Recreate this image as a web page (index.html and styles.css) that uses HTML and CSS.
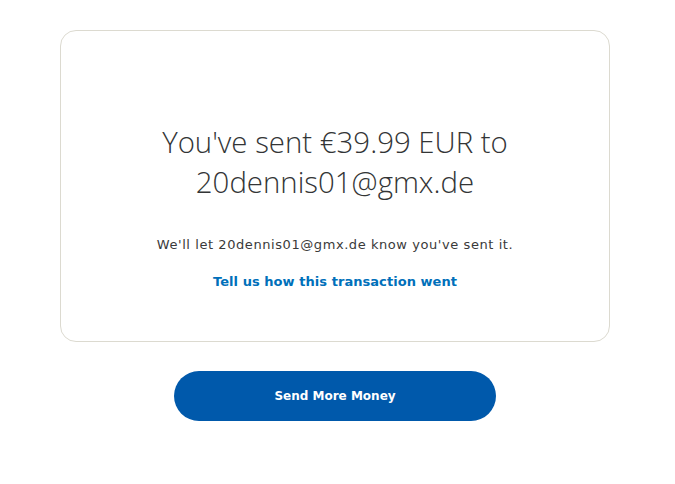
FILE: index.html
```html
<!DOCTYPE html>
<html>
<head>
<meta charset="utf-8">
<link rel="stylesheet" href="styles.css">
</head>
<body>
<main class="page">
  <section class="card">
    <h1 class="title">You've sent €39.99 EUR to<br>20dennis01@gmx.de</h1>
    <p class="note">We'll let 20dennis01@gmx.de know you've sent it.</p>
    <a class="feedback" href="#">Tell us how this transaction went</a>
  </section>
  <a class="btn" href="#">Send More Money</a>
</main>
</body>
</html>
```
FILE: styles.css
```css
html, body { margin: 0; padding: 0; background: #fff; }
.page {
  display: flex;
  flex-direction: column;
  align-items: center;
  padding-top: 30px;
  padding-left: 60px;
  width: 550px;
}
.card {
  box-sizing: border-box;
  width: 550px;
  height: 312px;
  border: 1px solid #dcdad0;
  border-radius: 16px;
  display: flex;
  flex-direction: column;
  align-items: center;
  padding-top: 91px;
}
.title {
  margin: 0;
  font-family: "Open Sans", sans-serif;
  font-weight: 300;
  font-size: 29.4px;
  line-height: 40px;
  color: #333536;
  text-align: center;
}
.note {
  margin: 33px 0 0;
  font-family: "DejaVu Sans", sans-serif;
  font-size: 13px;
  line-height: 20px;
  color: #3a3a3a;
  letter-spacing: 0.57px;
}
.feedback {
  margin-top: 17px;
  font-family: "DejaVu Sans", sans-serif;
  font-weight: bold;
  font-size: 13px;
  line-height: 20px;
  color: #0070ba;
  letter-spacing: 0.05px;
  text-decoration: none;
}
.btn {
  margin-top: 29px;
  width: 322px;
  height: 50px;
  border-radius: 25px;
  background: #0059ab;
  color: #fff;
  display: flex;
  align-items: center;
  justify-content: center;
  font-family: "DejaVu Sans", sans-serif;
  font-weight: bold;
  font-size: 12px;
  text-decoration: none;
}
```
